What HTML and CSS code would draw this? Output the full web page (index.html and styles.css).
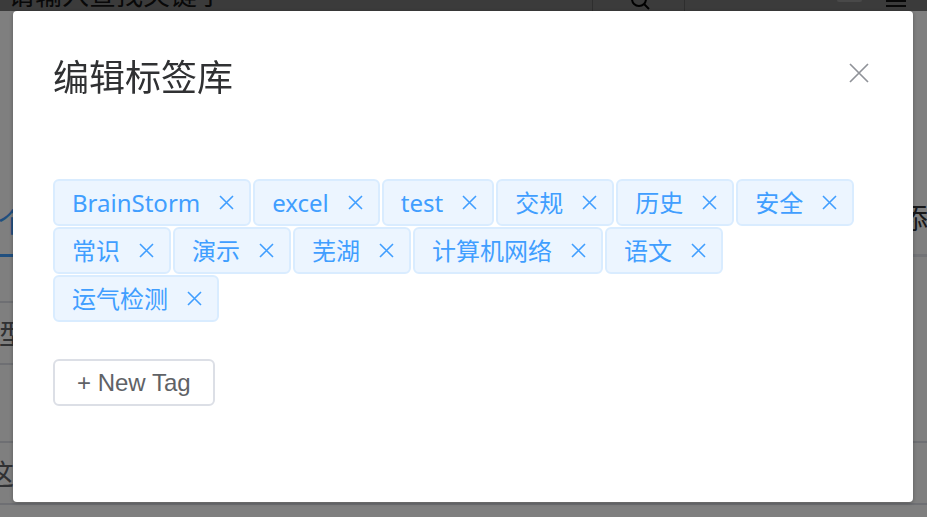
FILE: index.html
```html
<!DOCTYPE html>
<html lang="zh-CN">
<head>
<meta charset="utf-8">
<title>编辑标签库</title>
<link rel="stylesheet" href="styles.css">
</head>
<body>
<div class="page">
  <header class="topbar">
    <div class="search">请输入查找关键字</div>
    <div class="search-btn">
      <svg width="22" height="11" viewBox="0 0 22 11"><circle cx="9" cy="-1" r="7" fill="none" stroke="#000" stroke-width="2"/><line x1="14" y1="4" x2="19" y2="9" stroke="#000" stroke-width="2"/></svg>
    </div>
    <div class="tools">
      <span class="pill"></span>
      <span class="menu-icon"><i></i><i></i></span>
    </div>
  </header>
  <main class="content">
    <nav class="tabs">
      <span class="tab tab-active">个人</span>
      <span class="tab tab-right">添</span>
    </nav>
    <div class="row row-a"><div class="row-line"></div></div>
    <div class="row row-b"><div class="row-line"><span class="cell">类型</span></div></div>
    <div class="row row-c"></div>
    <div class="row row-d"><span class="cell">这</span></div>
  </main>
</div>
<div class="overlay"></div>
<div class="dialog">
  <div class="dialog-header">
    <h2 class="dialog-title">编辑标签库</h2>
    <button class="dialog-close" aria-label="关闭">
      <svg width="20" height="20" viewBox="0 0 20 20"><path d="M1 1 L19 19 M19 1 L1 19" stroke="#909399" stroke-width="1.7" fill="none"/></svg>
    </button>
  </div>
  <div class="tag-list">
    <span class="tag">BrainStorm<i class="tag-close"><svg width="15" height="15" viewBox="0 0 15 15"><path d="M1 1 L14 14 M14 1 L1 14" stroke="#409eff" stroke-width="1.6" fill="none"/></svg></i></span>
    <span class="tag">excel<i class="tag-close"><svg width="15" height="15" viewBox="0 0 15 15"><path d="M1 1 L14 14 M14 1 L1 14" stroke="#409eff" stroke-width="1.6" fill="none"/></svg></i></span>
    <span class="tag">test<i class="tag-close"><svg width="15" height="15" viewBox="0 0 15 15"><path d="M1 1 L14 14 M14 1 L1 14" stroke="#409eff" stroke-width="1.6" fill="none"/></svg></i></span>
    <span class="tag">交规<i class="tag-close"><svg width="15" height="15" viewBox="0 0 15 15"><path d="M1 1 L14 14 M14 1 L1 14" stroke="#409eff" stroke-width="1.6" fill="none"/></svg></i></span>
    <span class="tag">历史<i class="tag-close"><svg width="15" height="15" viewBox="0 0 15 15"><path d="M1 1 L14 14 M14 1 L1 14" stroke="#409eff" stroke-width="1.6" fill="none"/></svg></i></span>
    <span class="tag">安全<i class="tag-close"><svg width="15" height="15" viewBox="0 0 15 15"><path d="M1 1 L14 14 M14 1 L1 14" stroke="#409eff" stroke-width="1.6" fill="none"/></svg></i></span>
    <span class="tag">常识<i class="tag-close"><svg width="15" height="15" viewBox="0 0 15 15"><path d="M1 1 L14 14 M14 1 L1 14" stroke="#409eff" stroke-width="1.6" fill="none"/></svg></i></span>
    <span class="tag">演示<i class="tag-close"><svg width="15" height="15" viewBox="0 0 15 15"><path d="M1 1 L14 14 M14 1 L1 14" stroke="#409eff" stroke-width="1.6" fill="none"/></svg></i></span>
    <span class="tag">芜湖<i class="tag-close"><svg width="15" height="15" viewBox="0 0 15 15"><path d="M1 1 L14 14 M14 1 L1 14" stroke="#409eff" stroke-width="1.6" fill="none"/></svg></i></span>
    <span class="tag">计算机网络<i class="tag-close"><svg width="15" height="15" viewBox="0 0 15 15"><path d="M1 1 L14 14 M14 1 L1 14" stroke="#409eff" stroke-width="1.6" fill="none"/></svg></i></span>
    <span class="tag">语文<i class="tag-close"><svg width="15" height="15" viewBox="0 0 15 15"><path d="M1 1 L14 14 M14 1 L1 14" stroke="#409eff" stroke-width="1.6" fill="none"/></svg></i></span>
    <span class="tag">运气检测<i class="tag-close"><svg width="15" height="15" viewBox="0 0 15 15"><path d="M1 1 L14 14 M14 1 L1 14" stroke="#409eff" stroke-width="1.6" fill="none"/></svg></i></span>
  </div>
  <div class="new-tag-wrap">
    <button class="new-tag">+ New Tag</button>
  </div>
</div>
</body>
</html>
```
FILE: styles.css
```css
html, body {
  margin: 0;
  padding: 0;
}
body {
  width: 927px;
  height: 517px;
  overflow: hidden;
  font-family: "Noto Sans", "Noto Sans CJK SC", sans-serif;
  background: #fff;
}

/* ---------- background page ---------- */
.page {
  width: 927px;
  height: 517px;
  background: #fff;
  overflow: hidden;
}
.topbar {
  height: 11px;
  background: #777;
  display: flex;
  overflow: hidden;
}
.search {
  width: 584px;
  padding-left: 8px;
  margin-top: -20px;
  font-family: "Noto Sans CJK SC", sans-serif;
  font-size: 27px;
  line-height: 27px;
  color: #111;
  white-space: nowrap;
}
.search-btn {
  width: 91px;
  border-left: 1px solid #5c5c5c;
  border-right: 1px solid #5c5c5c;
  display: flex;
  justify-content: center;
}
.search-btn svg {
  display: block;
  margin-left: 4px;
}
.tools {
  flex: 1;
  display: flex;
  align-items: flex-start;
  padding-left: 152px;
}
.pill {
  width: 25px;
  height: 2px;
  background: #929292;
  border-radius: 0 0 3px 3px;
}
.menu-icon {
  margin-left: 24px;
  display: flex;
  flex-direction: column;
  gap: 3px;
}
.menu-icon i {
  display: block;
  width: 20px;
  height: 2px;
  background: #111;
}

.content {
  display: flex;
  flex-direction: column;
}
.tabs {
  height: 243px;
  display: flex;
  justify-content: space-between;
  align-items: flex-end;
  border-bottom: 3px solid #e4e7ed;
}
.tab {
  font-family: "Noto Sans CJK SC", sans-serif;
  font-size: 28px;
  line-height: 28px;
  color: #303133;
  padding-bottom: 20px;
}
.tab-active {
  color: #409eff;
  margin-left: -2px;
  padding-bottom: 19px;
  border-bottom: 3px solid #409eff;
  margin-bottom: -3px;
}
.tab-right {
  margin-right: -1px;
  padding-bottom: 23px;
}
.row {
  display: flex;
}
.row-line {
  width: 300px;
  display: flex;
  align-items: center;
  border-bottom: 2px solid #dcdfe6;
}
.row-a .row-line {
  height: 44px;
}
.row-b .row-line {
  height: 60px;
}
.row-c {
  height: 76px;
  border-bottom: 2px solid #dcdfe6;
}
.row-d {
  height: 60px;
  align-items: center;
  border-bottom: 2px solid #dcdfe6;
}
.cell {
  font-family: "Noto Sans CJK SC", sans-serif;
  font-size: 28px;
  color: #606266;
  white-space: nowrap;
}
.row-b .cell {
  margin-left: -29px;
}
.row-d .cell {
  margin-left: -14px;
}

.overlay {
  position: fixed;
  inset: 0;
  background: rgba(0, 0, 0, 0.5);
}

/* ---------- dialog ---------- */
.dialog {
  position: fixed;
  left: 13px;
  top: 11px;
  width: 900px;
  height: 491px;
  box-sizing: border-box;
  padding: 0 40px;
  background: #fff;
  border-radius: 4px;
  box-shadow: 0 1px 4px rgba(0, 0, 0, 0.3);
}
.dialog-header {
  display: flex;
  justify-content: space-between;
  align-items: flex-start;
  padding-top: 46px;
}
.dialog-title {
  margin: 0;
  font-family: "Noto Sans CJK SC", sans-serif;
  font-weight: 400;
  font-size: 36px;
  line-height: 36px;
  color: #303133;
}
.dialog-close {
  margin: 6px 4px 0 0;
  padding: 0;
  border: 0;
  background: none;
  width: 20px;
  height: 20px;
}
.dialog-close svg {
  display: block;
}
.tag-list {
  margin-top: 86px;
  display: flex;
  flex-wrap: wrap;
  gap: 1px 2px;
}
.tag {
  display: inline-flex;
  align-items: center;
  box-sizing: border-box;
  height: 47px;
  padding: 0 15px 0 17px;
  border: 2px solid #d9ecff;
  border-radius: 6px;
  background: #ecf5ff;
  color: #409eff;
  font-size: 24px;
  line-height: 43px;
  white-space: nowrap;
}
.tag-close {
  display: block;
  width: 15px;
  height: 15px;
  margin-left: 19px;
}
.tag-close svg {
  display: block;
}
.new-tag-wrap {
  display: flex;
  margin-top: 37px;
}
.new-tag {
  box-sizing: border-box;
  height: 47px;
  padding: 0 22px;
  border: 2px solid #dcdfe6;
  border-radius: 6px;
  background: #fff;
  color: #606266;
  font-family: "Liberation Sans", Arial, sans-serif;
  font-size: 24px;
}
```
